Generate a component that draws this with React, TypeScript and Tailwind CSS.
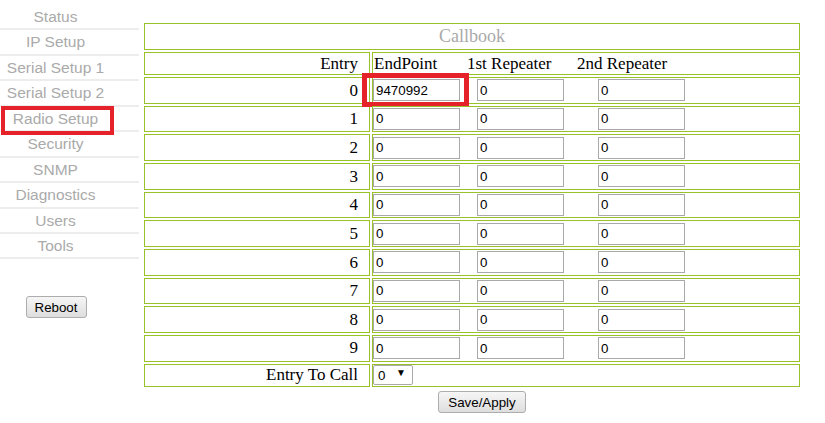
import { useState } from "react";

const NAV = [
  "Status",
  "IP Setup",
  "Serial Setup 1",
  "Serial Setup 2",
  "Radio Setup",
  "Security",
  "SNMP",
  "Diagnostics",
  "Users",
  "Tools",
];

const INITIAL = [
  ["9470992", "0", "0"],
  ...Array.from({ length: 9 }, () => ["0", "0", "0"]),
];

const serif = "font-['Liberation_Serif','Times_New_Roman',serif]";
const sans = "font-['Liberation_Sans',Arial,sans-serif]";
const btn =
  "h-[22px] rounded-[3px] border border-[#adadad] bg-gradient-to-b from-[#f6f6f6] to-[#dedede] text-[13.33px] text-black leading-none";

function Field({ value, onChange, className = "" }: { value: string; onChange: (v: string) => void; className?: string }) {
  return (
    <input
      value={value}
      onChange={(e) => onChange(e.target.value)}
      className={`h-[22px] w-[87px] border border-[#a9a9a9] bg-white px-[2px] text-[13.33px] text-black outline-none ${sans} ${className}`}
    />
  );
}

export default function App() {
  const [rows, setRows] = useState(INITIAL);
  const [call, setCall] = useState("0");

  const update = (r: number, c: number, v: string) =>
    setRows((prev) => prev.map((row, i) => (i === r ? row.map((x, j) => (j === c ? v : x)) : row)));

  return (
    <div className="relative flex min-h-[423px] w-[825px] bg-white">
      {/* side menu */}
      <nav className={`flex w-[139px] flex-col pt-[5px] ${sans}`}>
        {NAV.map((item) => (
          <div key={item} className="relative h-[25.44px] border-b-2 border-[#ededed]">
            <a className="block w-[111px] text-center text-[15.5px] leading-[23.44px] text-[#aaaaaa]">{item}</a>
            {item === "Radio Setup" && (
              <span className="pointer-events-none absolute left-[1px] top-[-1px] h-[29px] w-[113px] border-4 border-[#e52129]" />
            )}
          </div>
        ))}
        <div className="mt-[37px] flex w-[111px] justify-center pl-[1px]">
          <button className={`${btn} ${sans} w-[61px]`}>Reboot</button>
        </div>
      </nav>

      {/* callbook */}
      <main className={`ml-[5px] mt-[23px] flex w-[656px] flex-col ${serif}`}>
        <div className="flex h-[27px] items-center justify-center border border-[#99c12a] text-[18px] text-[#aaaaaa]">
          Callbook
        </div>

        <div className="mt-[2px] flex h-[23px] gap-[2px] text-[17px] text-black">
          <div className="flex w-[226px] items-center justify-end border border-[#99c12a] pr-[11px]">Entry</div>
          <div className="flex flex-1 items-center border border-[#99c12a]">
            <span className="w-[94px] pl-[1px]">EndPoint</span>
            <span className="w-[110px]">1st Repeater</span>
            <span>2nd Repeater</span>
          </div>
        </div>

        {rows.map((row, i) => (
          <div key={i} className="mt-[2px] flex h-[26.67px] gap-[2px] text-[17px] text-black">
            <div className="flex w-[226px] items-center justify-end border border-[#99c12a] pr-[11px]">{i}</div>
            <div className="relative flex flex-1 items-center border border-[#99c12a]">
              <Field value={row[0]} onChange={(v) => update(i, 0, v)} />
              <Field value={row[1]} onChange={(v) => update(i, 1, v)} className="ml-[17px]" />
              <Field value={row[2]} onChange={(v) => update(i, 2, v)} className="ml-[34px]" />
              {i === 0 && (
                <span className="pointer-events-none absolute left-[-11px] top-[-5px] h-[34px] w-[107px] border-[5px] border-[#e52129]" />
              )}
            </div>
          </div>
        ))}

        <div className="mt-[2px] flex h-[23px] gap-[2px] text-[17px] text-black">
          <div className="flex w-[226px] items-center justify-end border border-[#99c12a] pr-[11px]">Entry To Call</div>
          <div className="flex flex-1 items-center border border-[#99c12a]">
            <div className="relative">
              <select
                value={call}
                onChange={(e) => setCall(e.target.value)}
                className={`h-[20px] w-[40px] appearance-none rounded-[2px] border border-[#a9a9a9] bg-white pl-[4px] text-[13.33px] text-black outline-none ${sans}`}
              >
                {rows.map((_, i) => (
                  <option key={i} value={String(i)}>
                    {i}
                  </option>
                ))}
              </select>
              <span className="pointer-events-none absolute right-[7px] top-[4px] text-[10px] leading-[14px] text-black">▼</span>
            </div>
          </div>
        </div>

        <div className="mt-[3px] pl-[294px]">
          <button className={`${btn} ${sans} w-[88px]`}>Save/Apply</button>
        </div>
      </main>
    </div>
  );
}
